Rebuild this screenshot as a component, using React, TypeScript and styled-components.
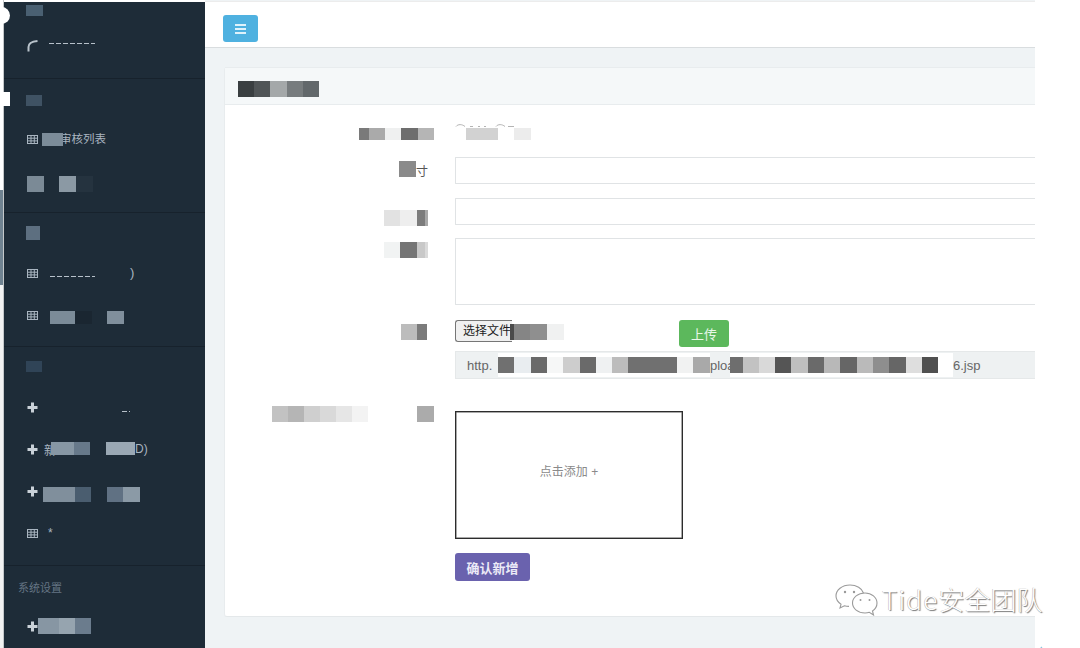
import React from 'react';
import styled, { createGlobalStyle } from 'styled-components';

const Global = createGlobalStyle`
  html, body { margin: 0; padding: 0; background: #fff; }
  body { font-family: "Liberation Sans", "Noto Sans CJK SC", sans-serif; overflow: hidden; }
  * { box-sizing: border-box; }
`;

const Page = styled.div`
  position: relative;
  display: flex;
  width: 1080px;
  height: 648px;
  overflow: hidden;
  background: #fff;
`;

const Edge = styled.div`
  width: 4px;
  flex: none;
  border-right: 1px solid #c4c8ca;
  background: linear-gradient(to bottom, #fff 0, #fff 190px, #6f8290 190px, #6f8290 285px, #f2f2f2 285px, #f2f2f2 100%);
`;

const Blob = styled.div`
  position: absolute;
  left: 0;
  top: 7px;
  width: 10px;
  height: 17px;
  background: #fff;
  border-radius: 0 9px 9px 0;
`;

const Notch = styled.div`
  position: absolute;
  left: 0;
  top: 92px;
  width: 10px;
  height: 14px;
  background: #fff;
`;

const Sidebar = styled.aside`
  width: 201px;
  flex: none;
  margin-top: 2px;
  background: #1e2c38;
  color: #a3afbb;
  font-size: 12px;
`;

const Section = styled.section<{ $last?: boolean; $pb?: number }>`
  padding-bottom: ${p => (p.$last ? 0 : p.$pb ?? 10)}px;
  border-bottom: ${p => (p.$last ? 'none' : '1px solid #17222c')};
`;

const SectionHead = styled.div<{ $h?: number; $pt?: number }>`
  display: flex;
  align-items: center;
  height: ${p => p.$h ?? 39}px;
  padding-left: 22px;
  padding-top: ${p => p.$pt ?? 0}px;
  gap: 4px;
`;

const SectionTitle = styled.span`
  margin-left: -8px;
  font-size: 11px;
  color: #657584;
  letter-spacing: 0;
`;

const Item = styled.div<{ $pb?: number; $pt?: number }>`
  display: flex;
  align-items: center;
  height: 42px;
  padding: ${p => p.$pt ?? 0}px 0 ${p => p.$pb ?? 0}px 23px;
  white-space: nowrap;
`;

const IconSlot = styled.span`
  display: inline-flex;
  width: 11px;
  height: 11px;
  flex: none;
  color: #a9b5c0;
`;

const ItemText = styled.span<{ $ml?: number; $mt?: number; $size?: number }>`
  margin-left: ${p => p.$ml ?? 0}px;
  margin-top: ${p => p.$mt ?? 0}px;
  font-size: ${p => p.$size ?? 12}px;
  color: #a9b5c0;
`;

const Sliver = styled.span<{ $w: number; $ml?: number; $mt?: number }>`
  display: block;
  flex: none;
  width: ${p => p.$w}px;
  height: 1px;
  margin-left: ${p => p.$ml ?? 0}px;
  margin-top: ${p => p.$mt ?? 0}px;
  background: repeating-linear-gradient(to right, #b7c1ca 0 5px, #1e2c38 5px 7px);
`;

const Cell = styled.span<{ $w: number; $h: number; $c: string }>`
  display: block;
  flex: none;
  width: ${p => p.$w}px;
  height: ${p => p.$h}px;
  background: ${p => p.$c};
`;

const MosaicWrap = styled.span<{ $ml?: number; $mt?: number; $mr?: number }>`
  display: inline-flex;
  flex: none;
  z-index: 1;
  margin-left: ${p => p.$ml ?? 0}px;
  margin-right: ${p => p.$mr ?? 0}px;
  margin-top: ${p => p.$mt ?? 0}px;
`;

type CellDef = [number, string];

const Mosaic = ({ cells, h = 16, ml, mt, mr }: { cells: CellDef[]; h?: number; ml?: number; mt?: number; mr?: number }) => (
  <MosaicWrap $ml={ml} $mt={mt} $mr={mr}>
    {cells.map(([w, c], i) => (
      <Cell key={i} $w={w} $h={h} $c={c} />
    ))}
  </MosaicWrap>
);

const GridIcon = () => (
  <IconSlot>
    <svg width="11" height="11" viewBox="0 0 11 11" fill="none" stroke="currentColor" strokeWidth="1">
      <rect x="0.5" y="1.5" width="10" height="8" />
      <path d="M4 1.5v8M7.3 1.5v8M.5 4.2h10M.5 6.9h10" />
    </svg>
  </IconSlot>
);

const PlusIcon = () => (
  <IconSlot>
    <svg width="11" height="11" viewBox="0 0 11 11" fill="#c9d1d8">
      <path d="M4 .5h3V4h3.5v3H7v3.5H4V7H.5V4H4z" />
    </svg>
  </IconSlot>
);

const ArcIcon = () => (
  <IconSlot>
    <svg width="11" height="12" viewBox="0 0 11 12" fill="none" stroke="#b9c3cb" strokeWidth="2">
      <path d="M1.5 11.5V7C1.5 3.5 4.5 1.5 10.5 1" />
    </svg>
  </IconSlot>
);

const Main = styled.main`
  width: 830px;
  flex: none;
  display: flex;
  flex-direction: column;
  overflow: hidden;
  background: #eff3f5;
`;

const TopBar = styled.header`
  height: 47px;
  flex: none;
  padding: 13px 0 0 18px;
  background: #fff;
  border-top: 1px solid #ececec;
  margin-top: 1px;
  border-bottom: 1px solid #d9dddf;
`;

const MenuButton = styled.button`
  display: flex;
  flex-direction: column;
  align-items: center;
  justify-content: center;
  gap: 2px;
  width: 35px;
  height: 27px;
  padding: 0;
  border: none;
  border-radius: 3px;
  background: #4fb1e0;
`;

const MenuBar = styled.span`
  display: block;
  width: 11px;
  height: 2px;
  background: #dff2fb;
`;

const Content = styled.div`
  flex: 1;
  min-height: 0;
  padding: 19px 0 31px 19px;
`;

const Panel = styled.section`
  height: 100%;
  display: flex;
  flex-direction: column;
  background: #fff;
  border-left: 1px solid #e8ecee;
  border-bottom: 1px solid #e4e8ea;
  border-radius: 3px 0 0 3px;
`;

const PanelHead = styled.div`
  display: flex;
  align-items: center;
  height: 38px;
  flex: none;
  padding-left: 13px;
  background: #f5f8f9;
  border-top: 1px solid #e8ecee;
  border-bottom: 1px solid #e8ecee;
`;

const Form = styled.div`
  display: flex;
  flex-direction: column;
  padding-top: 17px;
`;

const Row = styled.div<{ $top?: number }>`
  display: grid;
  grid-template-columns: 209px 1fr;
  column-gap: 21px;
  margin-top: ${p => p.$top ?? 0}px;
`;

const Label = styled.div<{ $pr?: number; $pt?: number }>`
  display: flex;
  justify-content: flex-end;
  align-items: flex-start;
  padding-right: ${p => p.$pr ?? 0}px;
  padding-top: ${p => p.$pt ?? 0}px;
  font-size: 12px;
  color: #555;
`;

const LabelChar = styled.span`
  padding-top: 3px;
  line-height: 16px;
`;

const Control = styled.div`
  display: flex;
  flex-direction: column;
  min-width: 0;
`;

const ValueRow = styled.div`
  display: flex;
  flex-direction: column;
  height: 20px;
`;

const ValueArcs = styled.svg`
  display: block;
  flex: none;
  margin-top: 1px;
`;

const Input = styled.div`
  height: 27px;
  background: #fff;
  border: 1px solid #e0e3e5;
  border-right: none;
  border-radius: 1px 0 0 1px;
`;

const TextArea = styled(Input)`
  height: 67px;
`;

const FileRow = styled.div`
  display: flex;
  align-items: flex-start;
  height: 27px;
`;

const FileButton = styled.div`
  width: 57px;
  height: 22px;
  flex: none;
  border: 1px solid #767676;
  border-right: none;
  border-radius: 3px 0 0 3px;
  background: #f0f0f0;
  padding-left: 7px;
  font-size: 12px;
  line-height: 20px;
  color: #222;
  white-space: nowrap;
`;

const UploadButton = styled.button`
  width: 50px;
  height: 27px;
  margin-left: 115px;
  flex: none;
  padding: 0;
  border: none;
  border-radius: 3px;
  background: #5cb85c;
  color: #e8f7e8;
  font-family: inherit;
  font-size: 13px;
`;

const UrlBox = styled.div`
  display: flex;
  align-items: center;
  height: 28px;
  margin-top: 4px;
  padding-left: 11px;
  background: #eef1f2;
  border: 1px solid #e5e8e9;
  border-right: none;
  font-size: 13px;
  color: #666;
  white-space: nowrap;
`;

const UrlSmear = styled.span<{ $w: number }>`
  display: flex;
  align-items: center;
  flex: none;
  width: ${p => p.$w}px;
  height: 24px;
  background: #fff;
`;

const UrlText = styled.span<{ $w: number }>`
  display: block;
  flex: none;
  width: ${p => p.$w}px;
`;

const UploadBox = styled.div`
  display: flex;
  align-items: center;
  justify-content: center;
  width: 228px;
  height: 128px;
  padding-bottom: 10px;
  border: 1px solid #2c2c2c;
  box-shadow: inset 0 0 0 0.5px #555;
  font-size: 12px;
  color: #8a8a8a;
`;

const SubmitButton = styled.button`
  display: block;
  width: 75px;
  height: 28px;
  margin-top: 14px;
  padding: 0;
  border: none;
  border-radius: 3px;
  background: #6a62ae;
  color: #eceaf7;
  font-family: inherit;
  font-size: 13px;
  font-weight: 700;
`;

const Watermark = styled.div`
  position: absolute;
  left: 833px;
  top: 581px;
  display: flex;
  align-items: center;
  gap: 3px;
  height: 36px;
  color: #fff;
  font-family: "Noto Sans CJK SC", "Noto Sans", sans-serif;
  font-size: 26px;
  font-weight: 300;
  line-height: 36px;
  white-space: nowrap;
  text-shadow: 1px 1px 1px #777, -0.5px -0.5px 0 #bbb;
`;

const WatermarkLatin = styled.span`
  letter-spacing: 1.2px;
`;

const Corner = styled.div`
  position: absolute;
  left: 1035px;
  top: 640px;
`;

const WeChat = () => (
  <svg width="46" height="34" viewBox="0 0 46 34" fill="#fff" stroke="#9b9b9b" strokeWidth="1.1">
    <path d="M17 3C9 3 3 8 3 14c0 3.4 2 6.2 5 8.3L7 26l4.4-2.2c1.4.4 3 .6 4.6.6" />
    <path d="M17 3c6.500 0 12 3.400 13.500 8" />
    <path d="M32 11c-7 0-12.500 4.500-12.500 10S25 31 32 31c1.500 0 3-.2 4.300-.7L40.500 33l-1-4c3-2 4.500-4.800 4.500-8 0-5.500-5.500-10-12-10z" />
    <circle cx="12" cy="10" r="1.200" fill="#999" stroke="none" />
    <circle cx="21" cy="10" r="1.200" fill="#999" stroke="none" />
    <circle cx="27.500" cy="18" r="1" fill="#999" stroke="none" />
    <circle cx="36.500" cy="18" r="1" fill="#999" stroke="none" />
  </svg>
);

export default function App() {
  return (
    <Page>
      <Global />
      <Edge />
      <Sidebar>
        <Section>
          <SectionHead $h={24}>
            <Mosaic h={11} mt={-7} cells={[[17, '#4a6072']]} />
          </SectionHead>
          <Item $pb={4}>
            <ArcIcon />
            <Sliver $w={46} $ml={11} $mt={-4} />
          </Item>
        </Section>
        <Section>
          <SectionHead>
            <Mosaic h={11} mt={4} cells={[[16, '#3f5263']]} />
          </SectionHead>
          <Item>
            <GridIcon />
            <Mosaic h={13} ml={4} mr={-3} cells={[[21, '#7c8c99']]} />
            <ItemText $size={11.5} $mt={-2}>审核列表</ItemText>
          </Item>
          <Item $pt={6}>
            <Mosaic cells={[[17, '#7b8a96'], [15, '#1e2c38'], [17, '#8b99a4'], [17, '#25333f']]} />
          </Item>
        </Section>
        <Section>
          <SectionHead>
            <Mosaic h={14} cells={[[14, '#5d6f80']]} />
          </SectionHead>
          <Item>
            <GridIcon />
            <Sliver $w={45} $ml={12} $mt={6} />
            <ItemText $ml={35} $size={13} $mt={-2}>)</ItemText>
          </Item>
          <Item>
            <GridIcon />
            <Mosaic h={13} ml={12} mt={4} cells={[[25, '#7b8b98'], [17, '#1a2631'], [15, '#1e2c38'], [17, '#808f9c']]} />
          </Item>
        </Section>
        <Section $pb={11}>
          <SectionHead>
            <Mosaic h={11} cells={[[16, '#304457']]} />
          </SectionHead>
          <Item>
            <PlusIcon />
            <Sliver $w={8} $ml={84} $mt={8} />
          </Item>
          <Item>
            <PlusIcon />
            <ItemText $ml={6}>新</ItemText>
            <Mosaic h={13} ml={-5} mt={-2} cells={[[23, '#8797a4'], [16, '#67798a'], [16, '#1e2c38'], [29, '#9aa8b4']]} />
            <ItemText>D)</ItemText>
          </Item>
          <Item>
            <PlusIcon />
            <Mosaic h={15} ml={5} mt={7} cells={[[32, '#808f9c'], [16, '#4a5d6f'], [16, '#1e2c38'], [16, '#607183'], [17, '#8b9aa6']]} />
          </Item>
          <Item>
            <GridIcon />
            <ItemText $ml={10}>*</ItemText>
          </Item>
        </Section>
        <Section $last>
          <SectionHead $pt={3}>
            <SectionTitle>系统设置</SectionTitle>
          </SectionHead>
          <Item>
            <PlusIcon />
            <Mosaic h={16} cells={[[21, '#8796a3'], [16, '#96a4af'], [16, '#6b7c8d']]} />
          </Item>
        </Section>
      </Sidebar>
      <Main>
        <TopBar>
          <MenuButton aria-label="menu">
            <MenuBar />
            <MenuBar />
            <MenuBar />
          </MenuButton>
        </TopBar>
        <Content>
          <Panel>
            <PanelHead>
              <Mosaic mt={6} cells={[[16, '#3a3f41'], [16, '#505557'], [17, '#a4a8a9'], [16, '#777c7e'], [16, '#62686b']]} />
            </PanelHead>
            <Form>
              <Row>
                <Label $pt={6}>
                  <Mosaic h={12} cells={[[10, '#7a7a7a'], [16, '#aaaaaa'], [16, '#eff0f0'], [17, '#6e6e6e'], [16, '#b5b5b5']]} />
                </Label>
                <Control>
                  <ValueRow>
                    <ValueArcs width="76" height="5" viewBox="0 0 76 5" fill="none" stroke="#b4b4b4" strokeWidth="1">
                      <path d="M1 3.500C3 1 7 1 10 3.500M41 3.500C43 1 47 1 50 3.500M15 3.500h3M23 3.500h2M29 3.500h2M53 3.500h6" />
                    </ValueArcs>
                    <Mosaic h={12} ml={11} cells={[[32, '#d2d2d2'], [16, '#fff'], [17, '#ececec']]} />
                  </ValueRow>
                </Control>
              </Row>
              <Row $top={15}>
                <Label $pr={6} $pt={4}>
                  <Mosaic cells={[[17, '#8a8a8a']]} />
                  <LabelChar>寸</LabelChar>
                </Label>
                <Control><Input /></Control>
              </Row>
              <Row $top={14}>
                <Label $pr={6} $pt={12}>
                  <Mosaic cells={[[16, '#e2e2e2'], [17, '#eeeeee'], [8, '#7c7c7c'], [3, '#a8a8a8']]} />
                </Label>
                <Control><Input /></Control>
              </Row>
              <Row $top={12}>
                <Label $pr={6} $pt={4}>
                  <Mosaic cells={[[16, '#f1f3f3'], [17, '#757575'], [8, '#c8c8c8'], [3, '#dadada']]} />
                </Label>
                <Control><TextArea /></Control>
              </Row>
              <Row $top={15}>
                <Label $pr={7} $pt={4}>
                  <Mosaic cells={[[16, '#bcbcbc'], [10, '#7b7b7b']]} />
                </Label>
                <Control>
                  <FileRow>
                    <FileButton>选择文件</FileButton>
                    <Mosaic ml={-2} mt={4} cells={[[4, '#4a4a4a'], [16, '#858585'], [17, '#8f8f8f'], [17, '#f0f1f1']]} />
                    <UploadButton>上传</UploadButton>
                  </FileRow>
                  <UrlBox>
                    <UrlText $w={31}>http.</UrlText>
                    <UrlSmear $w={212}>
                      <Mosaic cells={[[16, '#707070'], [17, '#e9edf0'], [16, '#6a6a6a'], [16, '#f6f7f7'], [17, '#cdcdcd'], [16, '#6a6a6a'], [16, '#eff1f2'], [16, '#bcbcbc'], [49, '#707070'], [16, '#f1f2f2'], [17, '#a9a9a9']]} />
                    </UrlSmear>
                    <UrlText $w={20}>ploa</UrlText>
                    <UrlSmear $w={223}>
                      <Mosaic cells={[[13, '#6e6e6e'], [16, '#c2c2c2'], [16, '#d9d9d9'], [16, '#555555'], [17, '#bfbfbf'], [16, '#6a6a6a'], [16, '#b8b8b8'], [17, '#666666'], [16, '#bababa'], [16, '#8e8e8e'], [17, '#666666'], [16, '#dedede'], [16, '#505050']]} />
                    </UrlSmear>
                    <UrlText $w={40}>6.jsp</UrlText>
                  </UrlBox>
                </Control>
              </Row>
              <Row $top={32}>
                <Label>
                  <Mosaic h={16} mt={-5} cells={[[16, '#c2c2c2'], [16, '#b5b5b5'], [16, '#cfcfcf'], [16, '#d9d9d9'], [16, '#e6e6e6'], [16, '#f3f3f3'], [49, '#fff'], [17, '#ababab']]} />
                </Label>
                <Control>
                  <UploadBox>点击添加 +</UploadBox>
                  <div><SubmitButton>确认新增</SubmitButton></div>
                </Control>
              </Row>
            </Form>
          </Panel>
        </Content>
      </Main>
      <Blob />
      <Notch />
      <Watermark>
        <WeChat />
        <span><WatermarkLatin>Tide</WatermarkLatin>安全团队</span>
      </Watermark>
      <Corner>
        <svg width="22" height="8" viewBox="0 0 22 8" fill="none" stroke="#8cc6de" strokeWidth="1.2">
          <path d="M7 1L2 6M15 2v6" />
        </svg>
      </Corner>
    </Page>
  );
}
